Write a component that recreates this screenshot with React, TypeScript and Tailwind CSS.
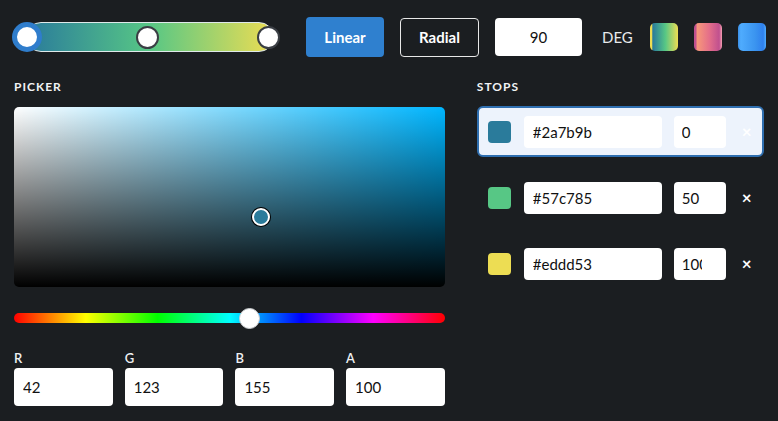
import React from 'react'

const stops = [
  { hex: '#2a7b9b', pos: '0', active: true },
  { hex: '#57c785', pos: '50', active: false },
  { hex: '#eddd53', pos: '100', active: false },
]

const rgba = [
  { label: 'R', value: '42' },
  { label: 'G', value: '123' },
  { label: 'B', value: '155' },
  { label: 'A', value: '100' },
]

export default function App() {
  return (
    <div className="w-[778px] h-[421px] overflow-hidden bg-[#1b1e21] text-white font-['Lato','Noto_Sans',sans-serif]">
      {/* top bar */}
      <div className="flex items-center pl-[12px] pt-[17px] h-[57px]">
        <div className="relative w-[272px] h-[30px]">
          <div className="absolute left-[14px] right-[10px] top-0 h-[30px] rounded-full border border-[#dfe9ea] bg-[linear-gradient(90deg,#2a7b9b,#57c785,#eddd53)]" />
          <div className="absolute left-0 top-0 w-[30px] h-[30px] rounded-full bg-white border-[5px] border-[#2f7dcc]" />
          <div className="absolute left-[124px] top-[3.5px] w-[23px] h-[23px] rounded-full bg-white border-2 border-[#3a3e44]" />
          <div className="absolute left-[245px] top-[3.5px] w-[23px] h-[23px] rounded-full bg-white border-2 border-[#3a3e44]" />
        </div>
        <button className="ml-[22px] w-[78px] h-[40px] rounded-[4px] bg-[#2f80cf] text-[15px] font-bold text-white">Linear</button>
        <button className="ml-[16px] w-[79px] h-[39px] rounded-[4px] border border-[#e8e8e8] text-[15px] font-bold text-white">Radial</button>
        <input readOnly value="90" className="ml-[16px] w-[87px] h-[38px] rounded-[4px] bg-white text-center text-[15px] text-[#111] outline-none" />
        <span className="ml-[20px] text-[15px] text-[#e8eaec]">DEG</span>
        <div className="ml-[17px] w-[28px] h-[28px] rounded-[5px] bg-[linear-gradient(90deg,#eddd53_0%,#eddd53_6%,#2a7b9b_10%,#57c785_55%,#eddd53_100%)]" />
        <div className="ml-[16px] w-[28px] h-[28px] rounded-[5px] bg-[linear-gradient(90deg,#c0508f_0%,#c0508f_6%,#f7977a_12%,#e46e8a_55%,#c0508f_90%,#f7a0b0_100%)]" />
        <div className="ml-[16px] w-[28px] h-[28px] rounded-[5px] bg-[linear-gradient(90deg,#3a8ee6_0%,#4facfe_10%,#3b95f0_60%,#2f80ed_90%,#4facfe_100%)]" />
      </div>

      <div className="flex gap-[32px] px-[14px] pt-[24px]">
        {/* picker */}
        <div className="w-[432px]">
          <div className="text-[12px] font-bold tracking-[1px] leading-[12px] text-[#f1f3f5]">PICKER</div>
          <div className="relative mt-[14px] h-[180px] rounded-[5px] bg-[#00b6ff] bg-[linear-gradient(to_top,#000,transparent),linear-gradient(to_right,#fff,transparent)]">
            <div className="absolute left-[238px] top-[101px] w-[18px] h-[18px] rounded-full bg-[#2a7b9b] border-2 border-white ring-1 ring-black" />
          </div>
          <div className="relative mt-[26px] h-[10px] rounded-full bg-[linear-gradient(to_right,#f00,#ff0,#0f0,#0ff,#00f,#f0f,#f00)]">
            <div className="absolute left-[225px] top-[-5.5px] w-[21px] h-[21px] rounded-full bg-white border border-[#c9cccf]" />
          </div>
          <div className="mt-[28px] flex gap-[12px]">
            {rgba.map(f => (
              <div key={f.label} className="flex-1">
                <div className="text-[13px] leading-[14px] font-semibold text-[#eef0f2]">{f.label}</div>
                <input readOnly value={f.value} className="mt-[3px] w-full h-[38px] rounded-[4px] bg-white pl-[9px] text-[15px] text-[#111] outline-none" />
              </div>
            ))}
          </div>
        </div>

        {/* stops */}
        <div className="w-[288px]">
          <div className="text-[12px] font-bold tracking-[1px] leading-[12px] text-[#f1f3f5]">STOPS</div>
          <div className="mt-[13px] flex flex-col gap-[15px]">
            {stops.map(s => (
              <div
                key={s.hex}
                className={`flex items-center h-[51px] rounded-[6px] border-2 pl-[9px] ${
                  s.active ? 'bg-[#edf3fc] border-[#2f6fb0]' : 'border-transparent'
                }`}
              >
                <div className="w-[23px] h-[22px] rounded-[4px]" style={{ backgroundColor: s.hex }} />
                <input readOnly value={s.hex} className="ml-[13px] w-[138px] h-[32px] rounded-[4px] bg-white pl-[9px] text-[15px] text-[#111] outline-none" />
                <input readOnly value={s.pos} className="ml-[12px] w-[52px] h-[32px] rounded-[4px] bg-white pl-[8px] pr-[24px] text-[15px] text-[#111] outline-none" />
                <span className="ml-[16px] text-[17px] font-bold text-white leading-none">×</span>
              </div>
            ))}
          </div>
        </div>
      </div>
    </div>
  )
}
